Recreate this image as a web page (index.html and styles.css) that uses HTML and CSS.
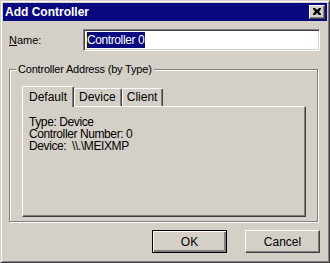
FILE: index.html
```html
<!DOCTYPE html>
<html lang="en">
<head>
  <meta charset="UTF-8">
  <title>Add Controller</title>
  <link rel="stylesheet" href="styles.css">
</head>
<body>
  <div class="window">
    <div class="titlebar">
      <span class="title">Add Controller</span>
      <button class="close-btn" aria-label="Close">
        <svg width="8" height="7" viewBox="0 0 8 7">
          <path d="M0 0h2l2 2 2-2h2v1l-2 2.5 2 2.5v1h-2l-2-2-2 2h-2v-1l2-2.5-2-2.5z" fill="#000"/>
        </svg>
      </button>
    </div>

    <div class="dialog-body">
      <div class="name-row">
        <label class="name-label" for="name"><u>N</u>ame:</label>
        <div class="textbox" id="name"><span class="selected">Controller 0</span></div>
      </div>

      <fieldset class="group">
        <legend>Controller Address (by Type)</legend>
        <div class="group-inner">
          <div class="tabs">
            <div class="tab active">Default</div>
            <div class="tab">Device</div>
            <div class="tab">Client</div>
          </div>
          <div class="tab-panel">
            <div class="info">Type: Device
Controller Number: 0
Device:  \\.\MEIXMP</div>
          </div>
        </div>
      </fieldset>

      <div class="buttons">
        <button class="btn default">OK</button>
        <button class="btn">Cancel</button>
      </div>
    </div>
  </div>
</body>
</html>
```

FILE: styles.css
```css
:root {
  --face: #d4d0c8;
  --shadow: #808080;
  --dark: #404040;
  --light: #ffffff;
  --navy: #0a0a80;
}

* {
  margin: 0;
  padding: 0;
  box-sizing: border-box;
}

body {
  background: var(--face);
  font-family: 'Liberation Sans', Arial, sans-serif;
  font-size: 11px;
  line-height: 13px;
  color: #000;
}

.window {
  width: 330px;
  height: 263px;
  background: var(--face);
  border: 1px solid;
  border-color: var(--face) var(--dark) var(--dark) var(--face);
  box-shadow: inset 1px 1px var(--light), inset -1px -1px var(--shadow);
  padding: 2px;
  display: flex;
  flex-direction: column;
}

.titlebar {
  height: 18px;
  background: var(--navy);
  display: flex;
  align-items: center;
  justify-content: space-between;
  padding: 0 2px 0 2px;
}

.title {
  color: #fff;
  font-weight: bold;
  font-size: 12px;
}

.close-btn {
  width: 16px;
  height: 14px;
  background: var(--face);
  border: 1px solid;
  border-color: var(--light) var(--dark) var(--dark) var(--light);
  box-shadow: inset -1px -1px var(--shadow);
  display: flex;
  align-items: center;
  justify-content: center;
  padding: 0 1px 1px 0;
}

.dialog-body {
  flex: 1;
  padding: 8px 7px 0 6px;
  display: flex;
  flex-direction: column;
}

.name-row {
  display: flex;
  align-items: center;
  height: 22px;
}

.name-label {
  width: 74px;
}

.textbox {
  flex: 1;
  height: 22px;
  background: #fff;
  border: 1px solid;
  border-color: var(--shadow) var(--light) var(--light) var(--shadow);
  box-shadow: inset 1px 1px var(--dark), inset -1px -1px var(--face);
  padding: 2px 2px;
  display: flex;
  align-items: center;
}

.selected {
  background: var(--navy);
  color: #fff;
  font-size: 12px;
  line-height: 16px;
  letter-spacing: -0.4px;
  border-left: 1px solid #ffff00;
  padding-right: 1px;
}

.group {
  margin: 12px 2px 0 0;
  border: 1px solid var(--shadow);
  box-shadow: inset 1px 1px var(--light), 1px 1px var(--light);
  min-width: 0;
}

.group legend {
  margin-left: 6px;
  padding: 0 2px;
  background: var(--face);
  letter-spacing: -0.2px;
}

.group-inner {
  padding: 10px 11px 4px 12px;
}

.tabs {
  display: flex;
  align-items: flex-end;
}

.tab {
  height: 18px;
  padding: 0 5px 0 4px;
  border-top: 1px solid var(--light);
  border-left: 1px solid var(--light);
  border-right: 1px solid var(--dark);
  box-shadow: inset -1px 0 var(--shadow);
  border-radius: 2px 2px 0 0;
  display: flex;
  align-items: center;
  font-size: 12px;
}

.tab.active {
  height: 21px;
  margin-bottom: -1px;
  padding: 0 6px 0 6px;
  background: var(--face);
  z-index: 1;
}

.tab-panel {
  height: 111px;
  border: 1px solid;
  border-color: var(--light) var(--dark) var(--dark) var(--light);
  box-shadow: inset -1px -1px var(--shadow);
  padding: 9px 6px;
}

.info {
  white-space: pre;
  font-size: 12px;
  line-height: 12px;
  letter-spacing: -0.4px;
}

.buttons {
  display: flex;
  justify-content: flex-end;
  gap: 18px;
  margin-top: 8px;
}

.btn {
  width: 75px;
  height: 23px;
  background: var(--face);
  border: 1px solid;
  border-color: var(--light) var(--dark) var(--dark) var(--light);
  box-shadow: inset -1px -1px var(--shadow);
  font-family: 'Liberation Sans', Arial, sans-serif;
  font-size: 12px;
  color: #000;
}

.btn.default {
  border: 1px solid #000;
  box-shadow: inset 1px 1px var(--light), inset -2px -2px var(--shadow), inset -1px -1px var(--dark);
}
```
